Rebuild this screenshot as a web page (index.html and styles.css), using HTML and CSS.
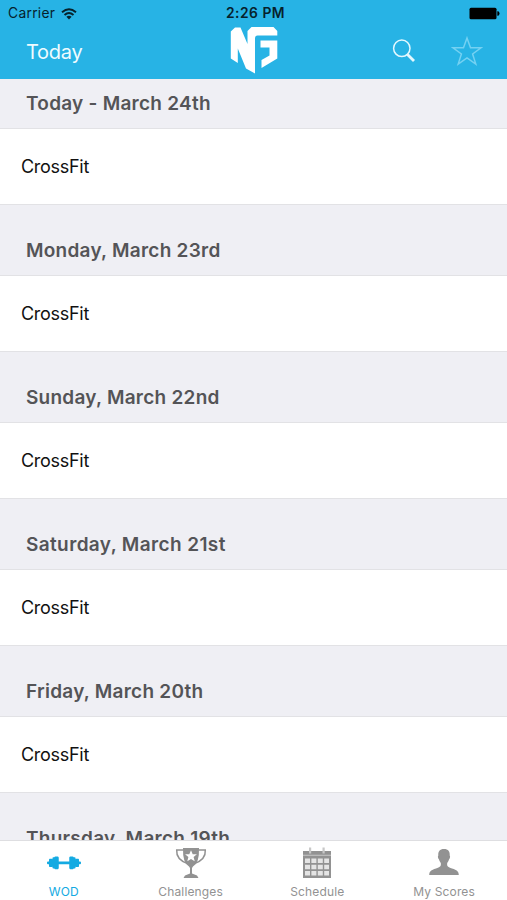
FILE: index.html
```html
<!DOCTYPE html>
<html lang="en">
<head>
<meta charset="utf-8">
<title>WOD</title>
<link rel="stylesheet" href="styles.css">
</head>
<body>
<div class="app">
  <header class="top">
    <div class="status">
      <div class="carrier"><span>Carrier</span>
        <svg class="wifi" width="16" height="12" viewBox="0 0 16 12" fill="none" stroke="#06222c" stroke-width="1.9"><path d="M1 4.2Q8-1.8 15 4.2M3.500 7Q8 3 12.500 7"/><path d="M8 11.500 5.400 8.800Q8 6.800 10.600 8.800Z" fill="#06222c" stroke="none"/></svg>
      </div>
      <span class="clock">2:26 PM</span>
      <svg class="battery" width="31" height="13" viewBox="0 0 31 13"><rect x=".5" y=".8" width="27" height="11.400" rx="1.500"/><path d="M28.300 4.300h1q1.200.7 1.200 2.200t-1.200 2.200h-1z"/></svg>
    </div>
    <nav class="bar">
      <span class="today">Today</span>
      <svg class="logo" width="48" height="48" viewBox="0 0 48 48" fill="#fff"><path d="M.8 5.500 5 1.500H10.500L17.500 18V5L21.500 1H43.500L47.300 5V9.500H27.500Q25 9.500 25 12.500V47.500L16 42.500 7.800 22.500V37L.8 32.500Z"/><path d="M30.500 14.500H47.300V32.500L31.500 42V34L39.500 29.500V21.500H30.500Z"/></svg>
      <svg class="search" width="24" height="24" viewBox="0 0 24 24" fill="none" stroke="#e4f8fe"><circle cx="9.800" cy="9.300" r="8.200" stroke-width="1.500"/><path d="m15.500 15.500 6.500 6.500" stroke-width="2.800"/></svg>
      <svg class="star" width="32" height="30" viewBox="0 0 32 30" fill="none" stroke="#74d1f2" stroke-width="1.500"><path d="M16 2 19.500 11.800H30L21.600 18 24.800 28.100 16 21.900 7.200 28.100 10.400 18 2 11.800H12.500Z"/></svg>
    </nav>
  </header>
  <main class="list">
    <h2 class="day first"><span>Today - March 24th</span></h2>
    <div class="row"><span>CrossFit</span></div>
    <h2 class="day"><span>Monday, March 23rd</span></h2>
    <div class="row"><span>CrossFit</span></div>
    <h2 class="day"><span>Sunday, March 22nd</span></h2>
    <div class="row"><span>CrossFit</span></div>
    <h2 class="day wide"><span>Saturday, March 21st</span></h2>
    <div class="row"><span>CrossFit</span></div>
    <h2 class="day"><span>Friday, March 20th</span></h2>
    <div class="row"><span>CrossFit</span></div>
    <h2 class="day"><span>Thursday, March 19th</span></h2>
  </main>
  <nav class="tabs">
    <div class="tab active">
      <svg width="36" height="34" viewBox="0 0 36 34" fill="currentColor"><rect x="1" y="15.500" width="34" height="2.800" rx="1"/><rect x="3" y="12.800" width="4" height="8.200" rx=".8"/><rect x="6.500" y="11.200" width="6" height="11.400" rx=".8"/><rect x="8.500" y="10.500" width="4" height="12.800" rx=".8"/><rect x="23.500" y="10.500" width="4" height="12.800" rx=".8"/><rect x="23.500" y="11.200" width="6" height="11.400" rx=".8"/><rect x="29" y="12.800" width="4" height="8.200" rx=".8"/></svg>
      <span>WOD</span>
    </div>
    <div class="tab">
      <svg width="36" height="34" viewBox="0 0 36 34" fill="currentColor"><path d="M10 2H26Q26.500 17 20 20.500L19 22V27.500L24 29.500 25.500 32H10.500L12 29.500 17 27.500V22L16 20.500Q9.500 17 10 2Z"/><path d="M10.500 4H3.700Q3 13.500 14.500 17.500M25.500 4H32.300Q33 13.500 21.500 17.500" fill="none" stroke="currentColor" stroke-width="1.500"/><path fill="#fff" d="m18 4.200 1.700 4h4.200l-3.300 2.900 1.100 4.200-3.700-2.300-3.700 2.300 1.100-4.200-3.300-2.900h4.200z"/></svg>
      <span>Challenges</span>
    </div>
    <div class="tab">
      <svg width="36" height="34" viewBox="0 0 36 34"><path fill="currentColor" d="M4 5H32V32H4Z"/><path fill="#c8c8c8" d="M4 8.800h28v1H4zM10 1.500h2.200v6H10zM23.500 1.500h2.200v6h-2.200z"/><path fill="#e4e4e4" d="M6 12.500h5v4.500H6zM12.400 12.500h5v4.500h-5zM18.800 12.500h5v4.500h-5zM25.200 12.500h4.800v4.500h-4.800zM6 18.700h5v4.500H6zM12.400 18.700h5v4.500h-5zM18.800 18.700h5v4.500h-5zM25.200 18.700h4.800v4.500h-4.800zM6 24.900h5v4.600H6zM12.400 24.900h5v4.600h-5zM18.800 24.900h5v4.600h-5zM25.200 24.900h4.800v4.600h-4.800z"/></svg>
      <span>Schedule</span>
    </div>
    <div class="tab">
      <svg width="36" height="34" viewBox="0 0 36 34" fill="currentColor"><path d="M18 3C22.300 3 24 5.500 23.700 9.500 24.500 10 24 12.500 23.100 13.200Q22.500 15.500 21.200 17C20.800 20.500 22 21 26 22.500 31 24.200 32.600 25 32.800 29H3.200C3.400 25 5 24.200 10 22.500 14 21 15.200 20.500 14.800 17Q13.500 15.500 12.900 13.200C12 12.500 11.500 10 12.300 9.500 12 5.500 13.700 3 18 3Z"/></svg>
      <span>My Scores</span>
    </div>
  </nav>
</div>
</body>
</html>
```
FILE: styles.css
```css
* { box-sizing: border-box; }
body { margin: 0; font-family: Inter, "Liberation Sans", sans-serif; background: #fff; }
.app { width: 507px; height: 900px; display: flex; flex-direction: column; overflow: hidden; }
svg { display: block; flex: none; }

.top { height: 79px; flex: none; background: #27b3e5; }
.status { height: 27px; padding: 0 7px 0 8px; display: grid; grid-template-columns: 1fr auto 1fr; align-items: center; color: #06222c; }
.carrier { display: flex; align-items: center; gap: 6px; font-size: 13.800px; line-height: 27px; letter-spacing: .3px; }
.clock { font-size: 13.800px; font-weight: 600; line-height: 27px; letter-spacing: .5px; padding-left: 3px; }
.battery { justify-self: end; fill: #000; }
.bar { height: 52px; display: flex; align-items: flex-start; padding: 0 24px 0 26px; color: #fff; }
.today { width: 204px; font-size: 20px; line-height: 51px; letter-spacing: -.25px; color: #effbff; }
.logo { margin-top: -1px; }
.search { margin: 12px 0 0 114px; }
.star { margin: 9px 0 0 auto; }

.list { flex: 1; min-height: 0; overflow: hidden; background: #efeff4; }
.day { margin: 0; height: 70px; padding: 21px 0 0 26px; font-size: 19px; font-weight: 600; line-height: 50px; letter-spacing: .25px; color: #545457; white-space: nowrap; }
.first { height: 49px; padding-top: 0; }
.wide { letter-spacing: .38px; }
.row { height: 77px; padding-left: 21px; border-top: 1px solid #e2e2e5; border-bottom: 1px solid #e2e2e5; background: #fff; font-size: 18px; line-height: 76px; letter-spacing: -.28px; color: #111; }

.tabs { height: 60px; flex: none; border-top: 1px solid #dedee1; background: #fff; display: grid; grid-template-columns: repeat(4, 1fr); }
.tab { display: flex; flex-direction: column; align-items: center; padding: 5px 0 0 1px; color: #929292; font-size: 12px; line-height: 16px; letter-spacing: .15px; }
.tab span { margin-top: 4px; }
.active { color: #14aae2; }
```
